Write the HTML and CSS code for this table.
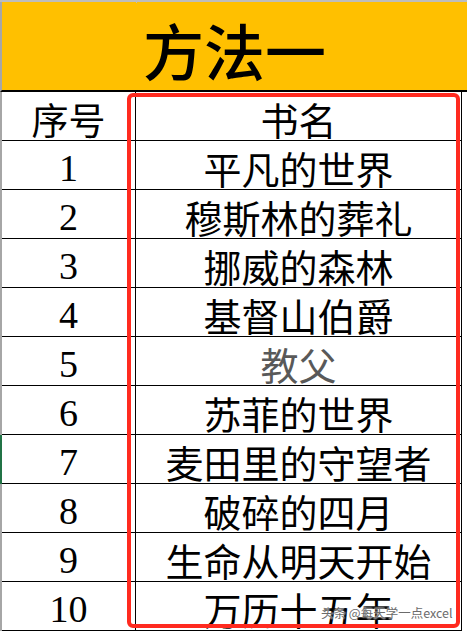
FILE: index.html
```
<!DOCTYPE html>
<html lang="zh-CN">
<head>
<meta charset="utf-8">
<link rel="stylesheet" href="styles.css">
</head>
<body>
<div class="sheet">
  <div class="top"><span class="tick"></span></div>
  <div class="title">方法一</div>
  <div class="rows">
    <div class="row head"><div class="c num cjk">序号</div><div class="c name">书名</div></div>
    <div class="row"><div class="c num">1</div><div class="c name">平凡的世界</div></div>
    <div class="row"><div class="c num">2</div><div class="c name">穆斯林的葬礼</div></div>
    <div class="row"><div class="c num">3</div><div class="c name">挪威的森林</div></div>
    <div class="row"><div class="c num">4</div><div class="c name">基督山伯爵</div></div>
    <div class="row"><div class="c num">5</div><div class="c name gray">教父</div></div>
    <div class="row"><div class="c num">6</div><div class="c name">苏菲的世界</div></div>
    <div class="row sel"><div class="c num">7</div><div class="c name">麦田里的守望者</div></div>
    <div class="row"><div class="c num">8</div><div class="c name">破碎的四月</div></div>
    <div class="row"><div class="c num">9</div><div class="c name">生命从明天开始</div></div>
    <div class="row"><div class="c num">10</div><div class="c name">万历十五年</div></div>
  </div>
  <div class="frame"></div>
  <div class="mark">头条 @每天学一点excel</div>
</div>
</body>
</html>
```

FILE: styles.css
```
html, body {
  margin: 0;
  padding: 0;
  background: #fff;
}
.sheet {
  position: relative;
  width: 467px;
  height: 633px;
  overflow: hidden;
  font-family: "Noto Sans CJK SC", sans-serif;
  color: #000;
}
.top {
  height: 2px;
  background: #bdbdbd;
  position: relative;
}
.tick {
  position: absolute;
  left: 136px;
  top: 0;
  width: 1px;
  height: 3px;
  background: #bdbdbd;
}
.title {
  height: 90px;
  box-sizing: border-box;
  border-left: 2px solid #a6a6a6;
  border-bottom: 2px solid #000;
  background: #ffc000;
  font-size: 61px;
  line-height: 80px;
  text-align: center;
  padding-top: 8px;
  font-weight: 500;
}
.rows {
  display: flex;
  flex-direction: column;
}
.row {
  display: grid;
  grid-template-columns: 134px 326px;
  height: 49px;
  box-sizing: border-box;
  border-left: 2px solid #a6a6a6;
  width: 463px;
}
.row.sel {
  border-left-color: #217346;
}
.c {
  box-sizing: border-box;
  border-bottom: 1px solid #000;
  border-right: 1px solid #000;
  display: flex;
  align-items: center;
  justify-content: center;
  height: 49px;
  padding-top: 5px;
  line-height: 40px;
}
.num {
  font-family: "Liberation Serif", serif;
  font-size: 38px;
}
.num.cjk {
  font-family: "Noto Sans CJK SC", sans-serif;
  font-size: 37px;
}
.name {
  font-size: 38px;
  white-space: nowrap;
}
.gray {
  color: #595959;
}
.frame {
  position: absolute;
  left: 127px;
  top: 93px;
  width: 333px;
  height: 535px;
  box-sizing: border-box;
  border: 4px solid #ff2a1f;
  border-radius: 6px;
}
.mark {
  position: absolute;
  left: 321px;
  top: 604px;
  font-family: "Noto Sans CJK SC", sans-serif;
  font-size: 12.5px;
  line-height: 18px;
  white-space: nowrap;
  color: #6b6b6b;
  text-shadow: 0 0 2px #fff, 0 0 2px #fff;
}
```
